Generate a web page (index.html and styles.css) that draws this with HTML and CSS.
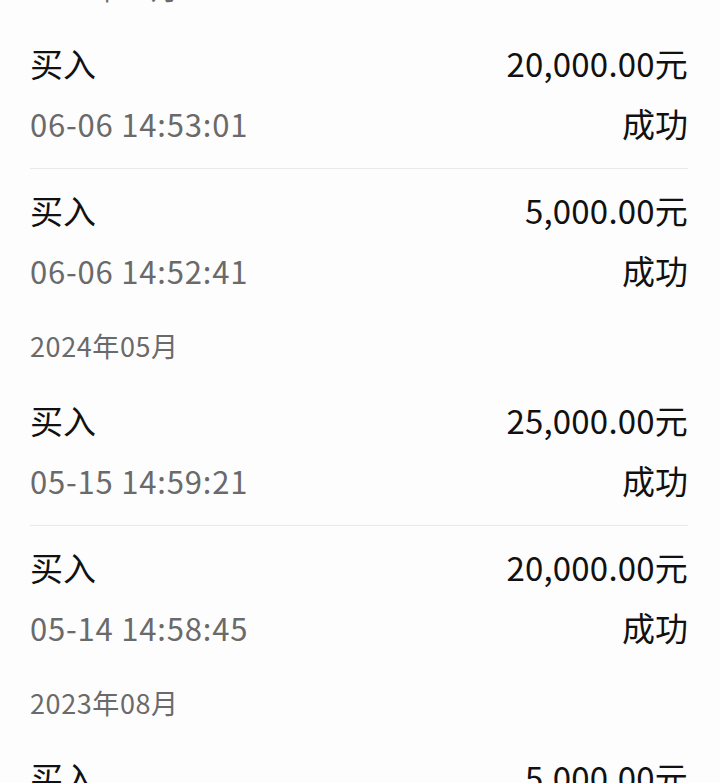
FILE: index.html
```html
<!DOCTYPE html>
<html lang="zh-CN">
<head>
  <meta charset="UTF-8">
  <meta name="viewport" content="width=device-width, initial-scale=1.0">
  <title>交易记录</title>
  <link rel="stylesheet" href="styles.css">
</head>
<body>
  <div class="record-list">
    <div class="month">2024年06月</div>
    <div class="record">
      <div class="line">
        <span class="type">买入</span>
        <span class="amount">20,000.00元</span>
      </div>
      <div class="line">
        <span class="time">06-06 14:53:01</span>
        <span class="status">成功</span>
      </div>
    </div>
    <div class="record">
      <div class="line">
        <span class="type">买入</span>
        <span class="amount">5,000.00元</span>
      </div>
      <div class="line">
        <span class="time">06-06 14:52:41</span>
        <span class="status">成功</span>
      </div>
    </div>

    <div class="month">2024年05月</div>
    <div class="record">
      <div class="line">
        <span class="type">买入</span>
        <span class="amount">25,000.00元</span>
      </div>
      <div class="line">
        <span class="time">05-15 14:59:21</span>
        <span class="status">成功</span>
      </div>
    </div>
    <div class="record">
      <div class="line">
        <span class="type">买入</span>
        <span class="amount">20,000.00元</span>
      </div>
      <div class="line">
        <span class="time">05-14 14:58:45</span>
        <span class="status">成功</span>
      </div>
    </div>

    <div class="month">2023年08月</div>
    <div class="record">
      <div class="line">
        <span class="type">买入</span>
        <span class="amount">5,000.00元</span>
      </div>
      <div class="line">
        <span class="time">08-21 14:55:12</span>
        <span class="status">成功</span>
      </div>
    </div>
  </div>
</body>
</html>
```

FILE: styles.css
```css
/* 交易记录列表 */
:root {
  --text-color: #111;
  --sub-color: #6a6a6a;
  --line-color: #e9e9e9;
  --background-color: #fdfdfd;
}

body {
  margin: 0;
  background-color: var(--background-color);
  color: var(--text-color);
  font-family: 'Noto Sans CJK SC', 'Noto Sans', sans-serif;
  overflow: hidden;
}

.record-list {
  margin-top: -42px;
  padding: 0 32px 0 30px;
}

.month {
  height: 64px;
  line-height: 62px;
  font-size: 27px;
  letter-spacing: 0.6px;
  color: var(--sub-color);
}

.record {
  padding: 19px 0 23px;
  display: flex;
  flex-direction: column;
  gap: 16px;
}

.record + .record {
  border-top: 1px solid var(--line-color);
}

.line {
  height: 44px;
  display: flex;
  justify-content: space-between;
  align-items: center;
}

.type,
.status,
.amount {
  font-size: 33px;
}

.amount {
  letter-spacing: 0.2px;
}

.time {
  font-size: 31px;
  letter-spacing: 0.8px;
  color: var(--sub-color);
}
```
